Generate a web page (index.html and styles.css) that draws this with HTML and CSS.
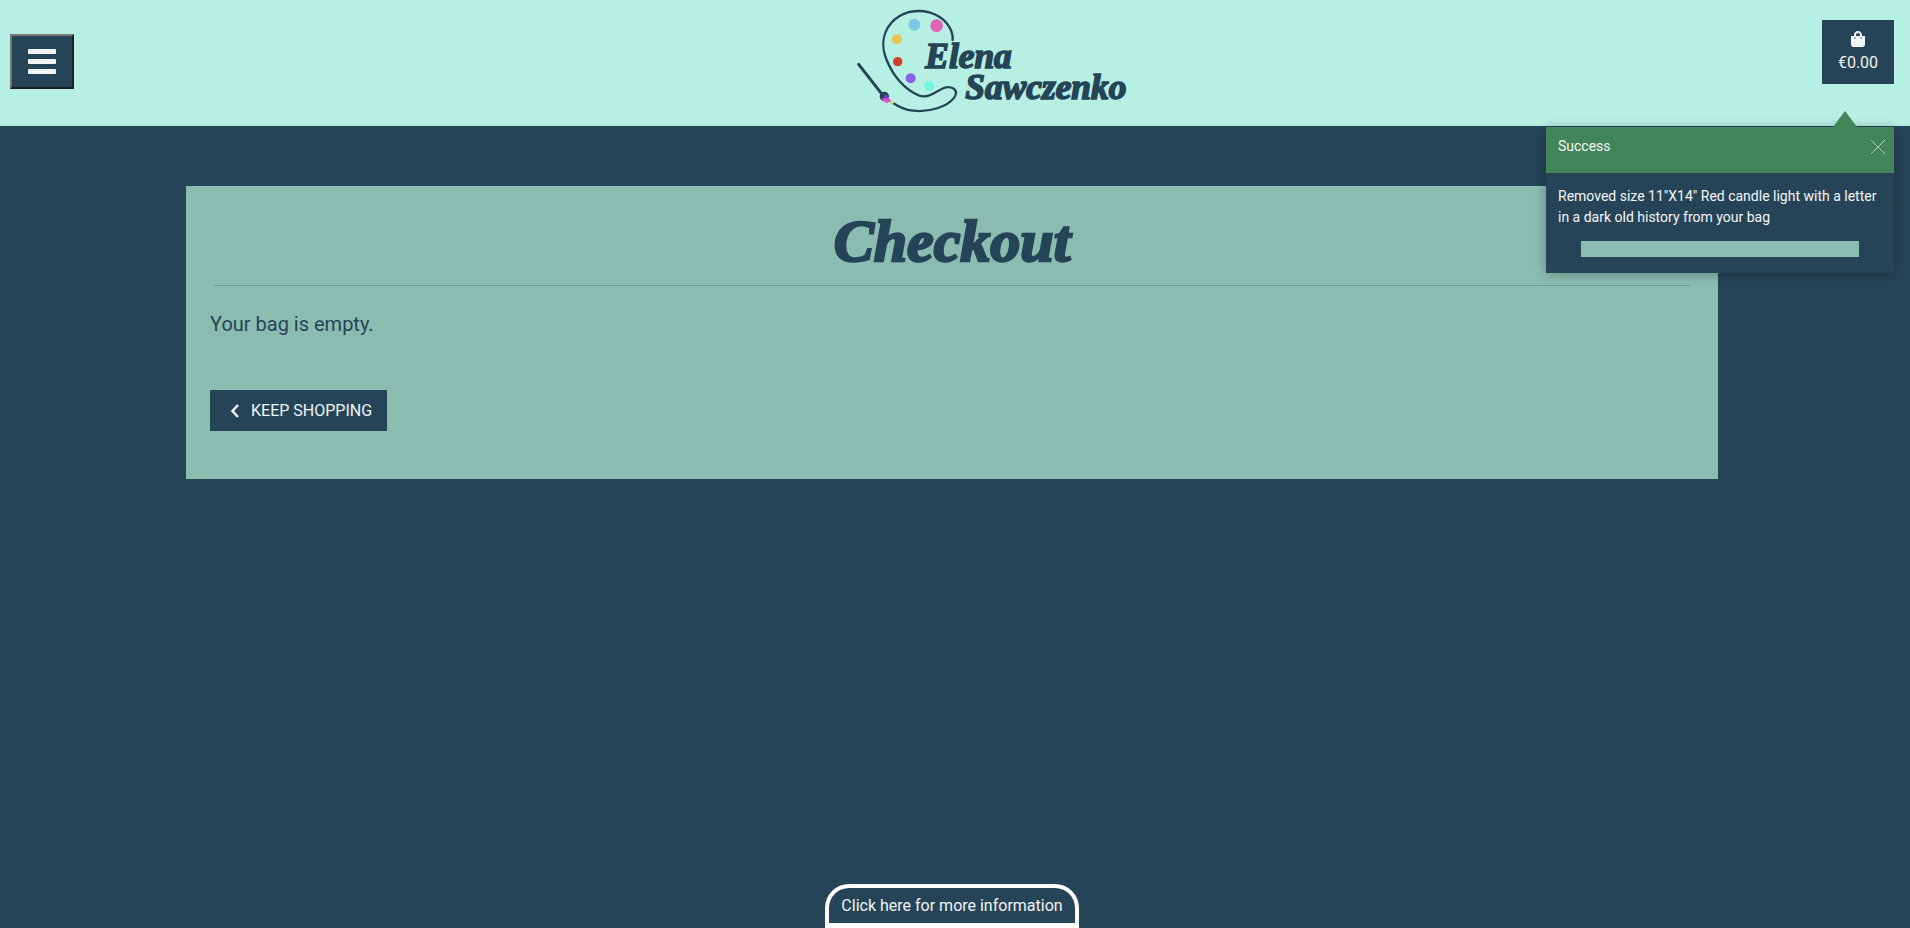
FILE: index.html
```html
<!DOCTYPE html>
<html lang="en">

<head>
    <meta charset="UTF-8">
    <meta name="viewport" content="width=device-width, initial-scale=1.0">
    <title>Checkout - Elena Sawczenko</title>
    <link rel="stylesheet" href="styles.css">
</head>

<body>
    <header class="site-header">
        <button class="menu-btn" aria-label="Menu">
            <span></span><span></span><span></span>
        </button>

        <a class="logo" href="#">
            <svg viewBox="-157 0 1050 378" width="350" height="126">
                <path class="logo-line" d="M370 120 C372 85 345 50 300 37 C260 27 215 35 185 70 C160 100 155 140 172 180 C190 225 225 270 270 287 C300 297 325 268 350 262 C372 258 388 272 375 292 C355 320 300 338 250 332 C225 329 205 318 190 308"/>
                <path class="logo-brush" d="M88 193 L156 280"/>
                <circle class="logo-brush-tip" cx="165" cy="289" r="14"/>
                <path class="logo-brush-paint" d="M157 296 L176 290 L186 304 L170 310 Z"/>
                <path class="logo-brush-purple" d="M166 284 L178 288 L176 296 L164 294 Z"/>
                <circle cx="190" cy="307" r="4" fill="#f2e35a"/>
                <circle cx="255" cy="74" r="18" fill="#7cc6e8"/>
                <circle cx="322" cy="77" r="19" fill="#e160b8"/>
                <circle cx="203" cy="118" r="15" fill="#e7c54f"/>
                <circle cx="205" cy="185" r="14" fill="#d23f28"/>
                <circle cx="244" cy="235" r="15" fill="#8a62e8"/>
                <circle cx="300" cy="258" r="15" fill="#6ff5e0"/>
                <text class="logo-text" x="288" y="203">Elena</text>
                <text class="logo-text" x="408" y="296">Sawczenko</text>
            </svg>
        </a>

        <a class="bag" href="#">
            <svg viewBox="0 0 448 512" width="14" height="16">
                <path d="M352 160v-32C352 57.420 294.579 0 224 0 153.420 0 96 57.420 96 128v32H0v272c0 44.183 35.817 80 80 80h288c44.183 0 80-35.817 80-80V160h-96zm-192-32c0-35.290 28.710-64 64-64s64 28.710 64 64v32H160v-32zm160 120c-13.255 0-24-10.745-24-24s10.745-24 24-24 24 10.745 24 24-10.745 24-24 24zm-192 0c-13.255 0-24-10.745-24-24s10.745-24 24-24 24 10.745 24 24-10.745 24-24 24z"/>
            </svg>
            <span>€0.00</span>
        </a>
    </header>

    <main class="content">
        <section class="card">
            <h1>Checkout</h1>
            <hr>
            <p>Your bag is empty.</p>
            <a class="keep-shopping" href="#">
                <svg viewBox="0 0 10 16" width="10" height="16">
                    <path d="M8 2 L2.500 8 L8 14"/>
                </svg>
                <span>KEEP SHOPPING</span>
            </a>
        </section>
    </main>

    <footer class="site-footer">
        <a class="more-info" href="#">Click here for more information</a>
    </footer>

    <div class="toast">
        <div class="toast-arrow"></div>
        <div class="toast-head">
            <strong>Success</strong>
            <svg viewBox="0 0 16 16" width="16" height="16">
                <path d="M1 1 L15 15 M15 1 L1 15"/>
            </svg>
        </div>
        <div class="toast-body">
            <p>Removed size 11"X14" Red candle light with a letter in a dark old history from your bag</p>
            <div class="toast-bar"></div>
        </div>
    </div>
</body>

</html>
```

FILE: styles.css
```css
* {
    box-sizing: border-box;
}

body {
    margin: 0;
    height: 100vh;
    display: flex;
    flex-direction: column;
    overflow: hidden;
    background-color: #264457;
    color: #264457;
    font-family: Roboto, "Liberation Sans", sans-serif;
}

a {
    color: inherit;
    text-decoration: none;
}

/* header */
.site-header {
    height: 126px;
    flex: none;
    display: grid;
    grid-template-columns: 1fr auto 1fr;
    align-items: start;
    padding: 0 16px 0 10px;
    background-color: #b6f0e3;
}

.menu-btn {
    width: 64px;
    height: 55px;
    margin-top: 34px;
    padding: 0;
    display: flex;
    flex-direction: column;
    align-items: center;
    justify-content: center;
    gap: 5px;
    background-color: #264457;
    border: 2px solid;
    border-color: #767676 #1f1f1f #1f1f1f #767676;
}

.menu-btn span {
    width: 28px;
    height: 5px;
    border-radius: 1px;
    background-color: #f0f4f5;
}

.logo {
    display: block;
    height: 126px;
}

.logo svg {
    display: block;
}

.logo-line {
    fill: none;
    stroke: #264457;
    stroke-width: 7;
    stroke-linecap: round;
}

.logo-brush {
    fill: none;
    stroke: #264457;
    stroke-width: 9;
    stroke-linecap: round;
}

.logo-brush-tip {
    fill: #264457;
}

.logo-brush-paint {
    fill: #e04fc8;
}

.logo-brush-purple {
    fill: #6a3fe0;
}

.logo-text {
    fill: #264457;
    stroke: #264457;
    stroke-width: 5;
    font-family: "Liberation Serif", serif;
    font-weight: bold;
    font-style: italic;
    font-size: 106px;
}

.bag {
    justify-self: end;
    width: 72px;
    height: 64px;
    margin-top: 20px;
    padding-top: 11px;
    display: flex;
    flex-direction: column;
    align-items: center;
    gap: 6px;
    background-color: #264457;
    color: #f0f4f5;
    font-size: 16px;
    line-height: 20px;
}

.bag svg {
    fill: #f0f4f5;
}

/* main card */
.content {
    flex: 1;
    width: 1904px;
    padding: 60px 186px 0;
}

.card {
    padding: 12px 24px 48px;
    background-color: #8bbcb0;
}

.card h1 {
    margin: 0;
    text-align: center;
    font-family: "Liberation Serif", serif;
    font-weight: bold;
    font-style: italic;
    font-size: 60px;
    line-height: 87px;
    -webkit-text-stroke: 2.5px #264457;
}

.card hr {
    margin: 0 4px;
    border: 0;
    border-top: 1px solid #6f9e96;
}

.card p {
    margin: 23px 0 51px;
    font-size: 20px;
    line-height: 30px;
}

.keep-shopping {
    width: 177px;
    height: 41px;
    display: flex;
    align-items: center;
    gap: 11px;
    padding-left: 20px;
    background-color: #264457;
    color: #f0f4f5;
    font-size: 16px;
}

.keep-shopping svg {
    fill: none;
    stroke: #f0f4f5;
    stroke-width: 2.500;
}

/* footer tab */
.site-footer {
    width: 1904px;
    flex: none;
    display: flex;
    justify-content: center;
}

.more-info {
    width: 254px;
    height: 44px;
    padding-top: 8px;
    text-align: center;
    border: 4px solid #fff;
    border-bottom-width: 5px;
    border-radius: 24px 24px 0 0;
    color: #f0f4f5;
    font-size: 16px;
    line-height: 20px;
}

/* toast over the page */
.toast {
    position: absolute;
    top: 127px;
    left: 1546px;
    width: 348px;
    background-color: #264457;
    color: #f4f6f7;
    font-size: 14px;
    line-height: 21px;
    box-shadow: 0 1px 10px rgba(0, 0, 0, 0.3);
}

.toast-arrow {
    position: absolute;
    top: -16px;
    left: 287px;
    width: 0;
    height: 0;
    border-left: 12px solid transparent;
    border-right: 12px solid transparent;
    border-bottom: 16px solid #418558;
}

.toast-head {
    height: 46px;
    display: flex;
    justify-content: space-between;
    padding: 9px 8px 0 12px;
    background-color: #418558;
}

.toast-head strong {
    font-weight: 400;
}

.toast-head svg {
    margin-top: 3px;
    fill: none;
    stroke: rgba(255, 255, 255, 0.6);
    stroke-width: 1;
}

.toast-body {
    padding: 13px 12px 16px;
}

.toast-body p {
    margin: 0 0 13px;
}

.toast-bar {
    width: 278px;
    height: 16px;
    margin-left: 23px;
    background-color: #8bbcb0;
}
```
